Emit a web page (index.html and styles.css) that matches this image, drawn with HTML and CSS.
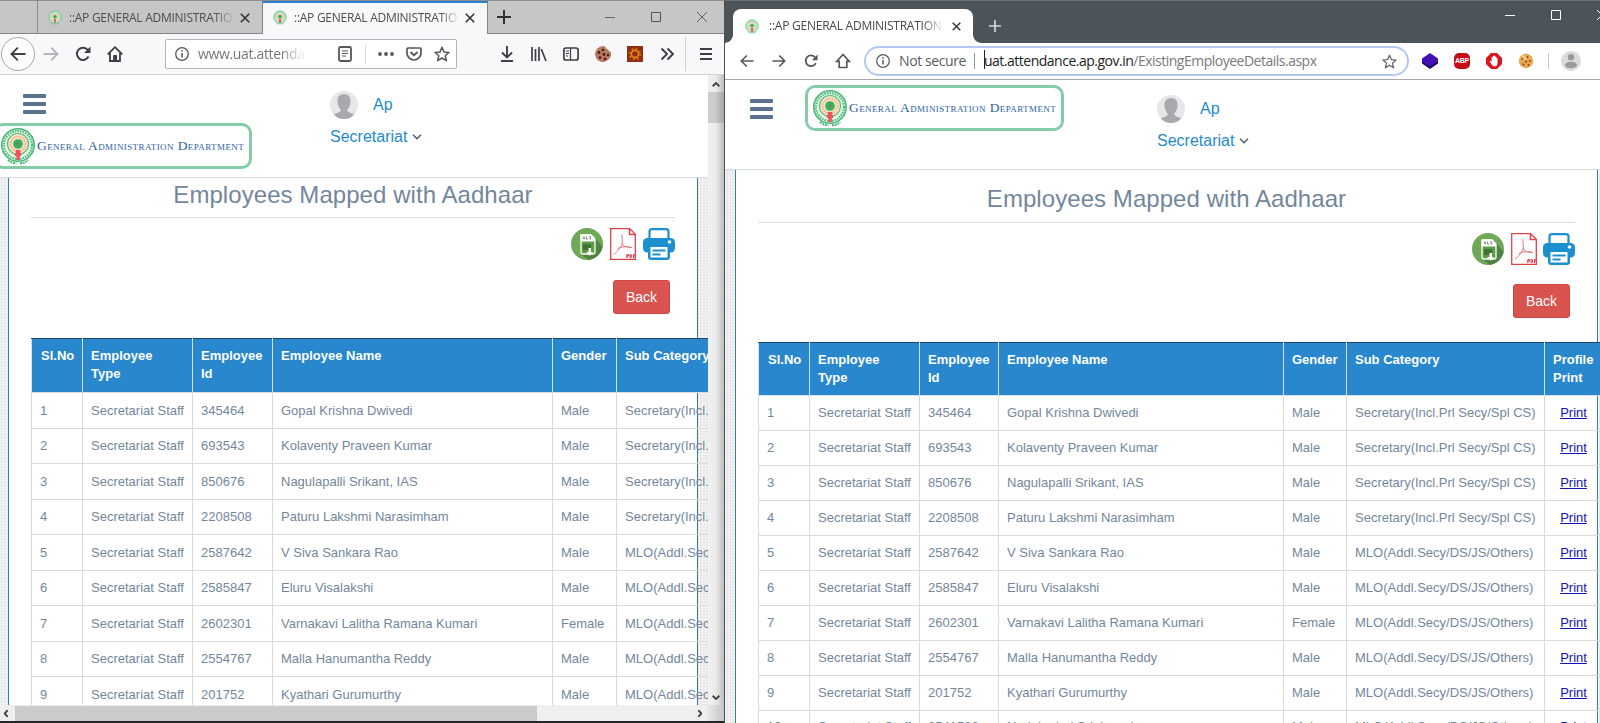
FILE: index.html
```html
<!DOCTYPE html>
<html lang="en">
<head>
<meta charset="utf-8">
<title>::AP GENERAL ADMINISTRATION</title>
<link rel="stylesheet" href="styles.css">
</head>
<body>
<svg class="defs" width="0" height="0">
  <symbol id="emblem" viewBox="0 0 36 38">
    <circle cx="18" cy="18" r="16.2" fill="#e9f7ea" stroke="#48b878" stroke-width="1.6"/>
    <circle cx="18" cy="18" r="14" fill="none" stroke="#4fbb7c" stroke-width="2.2" stroke-dasharray="1.6 1"/>
    <circle cx="18" cy="17" r="10.5" fill="#fbe6c8" stroke="#53bd80" stroke-width="1.2"/>
    <circle cx="18" cy="17" r="7.6" fill="#f9dcbc" stroke="#e9ab7c" stroke-width="1.4" stroke-dasharray="1.3 .9"/>
    <circle cx="18" cy="17" r="4.8" fill="#35b268"/>
    <path d="M16.4 17h3.2M18 14.6v5" stroke="#8b7a3c" stroke-width="1"/>
    <path d="M15.8 23h4.4v3h1v3h-1.4v4h-3.4v-4h-1.6v-3h1z" fill="#e8545a"/>
    <path d="M8 33q4 3.4 8.4 3.2M20 36.2q4.400.2 8.300-3.200" fill="none" stroke="#48b878" stroke-width="2" stroke-dasharray="2 .8"/>
  </symbol>
  <symbol id="avatar" viewBox="0 0 28 28">
    <circle cx="14" cy="14" r="14" fill="#e6e7e8"/>
    <path d="M14 3c4.400 0 6.800 3 6.500 7.500-.2 4-1.600 6.500-3.300 8 0 2.400 1.800 3 4.800 3.900.9.300 1.600.7 2 1.300A14 14 0 0 1 14 28 14 14 0 0 1 4 23.700c.4-.6 1.100-1 2-1.300 3-.9 4.800-1.500 4.800-3.900-1.700-1.500-3.100-4-3.300-8C7.200 6 9.600 3 14 3z" fill="#a7a9ac"/>
  </symbol>
  <symbol id="xls" viewBox="0 0 32 32">
    <circle cx="16" cy="16" r="16" fill="#6fa857"/>
    <path d="M23 9l8.500 9.500A16 16 0 0 1 18 31.900l-8-6z" fill="#4f8340"/>
    <path d="M10 7h10l4 4v13a2 2 0 0 1-2 2H12a2 2 0 0 1-2-2z" fill="#5c9c46" stroke="#fff" stroke-width="1.300"/>
    <path d="M9.500 6.500h11l3.500 4v3H9.500z" fill="#fff"/>
    <path d="M12 8.500l2 2.500m0-2.500L12 11M15.500 8.500V11H17M20 8.700h-1.500L20 11h-1.500" stroke="#5a7a50" stroke-width=".8" fill="none"/>
    <path d="M12 16h8v6h-8z" fill="#3f7434"/>
    <path d="M17.500 20h2.500v4h2.200l-3.500 3.700-3.500-3.700h2.300z" fill="#fff"/>
  </symbol>
  <symbol id="pdf" viewBox="0 0 26 32">
    <path d="M.7.7h19l5.600 5.600v25H.7z" fill="#fff" stroke="#e0424a" stroke-width="1.300"/>
    <path d="M19.500.7v5.800h5.800" fill="none" stroke="#e0424a" stroke-width="1.500"/>
    <path d="M12 6c-1 2 1 3 .2 9-.6 4-3.700 7-8.200 11.500M12 15c1 3 3.500 4.300 10 4.500M8 20.500c4-2 8-2.500 14-1" fill="none" stroke="#e87878" stroke-width="1"/>
    <path d="M16.800 30v-3.400h1.800v1.500h-1.600M20 26.600h1q1.500 1.500 0 3h-1zM23.500 30v-3.400h1.500M23.500 28.200h1" fill="none" stroke="#d8303a" stroke-width="1"/>
  </symbol>
  <symbol id="printer" viewBox="0 0 32 32">
    <path d="M6.500 11V3.500A2.500 2.500 0 0 1 9 1.100h14a2.500 2.500 0 0 1 2.500 2.400V11" fill="#fff" stroke="#1b8fd0" stroke-width="2.200"/>
    <rect x="0" y="10" width="32" height="14.500" rx="4.500" fill="#1b8fd0"/>
    <rect x="5" y="16" width="22" height="16" rx="3" fill="#1b8fd0"/>
    <rect x="7.500" y="19" width="17" height="10.500" fill="#fff"/>
    <path d="M9.500 22.500h13M9.500 26.500h8" stroke="#1b8fd0" stroke-width="2"/>
    <circle cx="26.500" cy="14" r="1.800" fill="#fff"/>
  </symbol>
  <symbol id="info" viewBox="0 0 14 14"><circle cx="7" cy="7" r="6.300" fill="none" stroke="currentColor" stroke-width="1.300"/><path d="M7 6v4.500M7 3.300v1.500" stroke="currentColor" stroke-width="1.500"/></symbol>
  <symbol id="star" viewBox="0 0 16 16"><path d="M8 1.300l2 4.600 5 .5-3.800 3.300 1.200 5L8 12l-4.400 2.700 1.200-5L1 6.400l5-.5z" fill="none" stroke="currentColor" stroke-width="var(--sw,1.500)" stroke-linejoin="round"/></symbol>
  <symbol id="close" viewBox="0 0 10 10"><path d="M.8.8l8.400 8.400M9.200.8L.8 9.200" stroke="currentColor" stroke-width="1.600"/></symbol>
  <symbol id="reload" viewBox="0 0 16 16"><path d="M13.500 10.500A6.100 6.100 0 1 1 12.800 4" fill="none" stroke="currentColor" stroke-width="2"/><path d="M15.500.5V7H9z" fill="currentColor"/></symbol>
  <symbol id="back" viewBox="0 0 16 16"><path d="M15.500 8H1.700M7.800 1.700L1.500 8l6.300 6.300" fill="none" stroke="currentColor" stroke-width="1.900"/></symbol>
  <symbol id="chev" viewBox="0 0 10 6"><path d="M1 .8l4 4 4-4" fill="none" stroke="currentColor" stroke-width="1.500"/></symbol>
  <symbol id="scroll-chev" viewBox="0 0 10 6"><path d="M.8.8L5 4.800 9.200.8" fill="none" stroke="currentColor" stroke-width="2.400"/></symbol>
</svg>

<main class="screen">
  <section class="win firefox">
    <div class="ff-tabs">
      <div class="ff-tab">
        <svg class="fav"><use href="#emblem"/></svg><span class="tab-title">::AP GENERAL ADMINISTRATIO</span><svg class="tab-x"><use href="#close"/></svg>
      </div>
      <div class="ff-tab active">
        <svg class="fav"><use href="#emblem"/></svg><span class="tab-title">::AP GENERAL ADMINISTRATIO</span><svg class="tab-x"><use href="#close"/></svg>
      </div>
      <svg class="ff-plus" viewBox="0 0 14 14"><path d="M7 0v14M0 7h14" stroke="#333" stroke-width="2"/></svg>
      <div class="ff-controls">
        <svg viewBox="0 0 10 10"><path d="M0 5.500h10" stroke="#666"/></svg>
        <svg viewBox="0 0 10 10"><path d="M.5.5h9v9h-9z" fill="none" stroke="#555"/></svg>
        <svg viewBox="0 0 10 10"><path d="M0 0l10 10M10 0L0 10" stroke="#555" stroke-width=".9"/></svg>
      </div>
    </div>
    <div class="ff-bar">
      <span class="ff-back"><svg class="i16"><use href="#back"/></svg></span>
      <svg class="i16 fwd dim"><use href="#back"/></svg>
      <svg class="i16 ff-reload"><use href="#reload"/></svg>
      <svg class="i16 ff-home" viewBox="0 0 16 16"><path d="M.7 8.300L8 1.200l7.300 7.100M3 7v8h10V7" fill="none" stroke="currentColor" stroke-width="1.800"/><path d="M6.700 15V9.500h2.800V15" fill="currentColor" stroke="currentColor"/></svg>
      <div class="ff-url">
        <svg class="i14"><use href="#info"/></svg>
        <span class="ff-address">www.uat.attenda</span>
        <svg class="i16 reader" viewBox="0 0 16 16"><rect x="2" y="1" width="12" height="14" rx="1.500" fill="none" stroke="currentColor" stroke-width="1.800"/><path d="M5 5h6M5 7.500h6M5 10h4" stroke="currentColor"/></svg>
        <i class="ff-div"></i>
        <svg class="i16 dots" viewBox="0 0 16 16"><circle cx="2" cy="8" r="1.900"/><circle cx="8" cy="8" r="1.900"/><circle cx="14" cy="8" r="1.900"/></svg>
        <svg class="i16 pocket" viewBox="0 0 16 16"><path d="M2 2h12q1 0 1 1v4a7 7 0 0 1-14 0V3q0-1 1-1z" fill="none" stroke="currentColor" stroke-width="1.700"/><path d="M4.500 6L8 9.300 11.500 6" fill="none" stroke="currentColor" stroke-width="1.900"/></svg>
        <svg class="i16"><use href="#star"/></svg>
      </div>
      <div class="ff-tools">
        <svg viewBox="0 0 16 16"><path d="M8 0v11M3 6.500l5 5 5-5M2 15h12" fill="none" stroke="currentColor" stroke-width="1.900"/></svg>
        <svg viewBox="0 0 16 16"><path d="M1 1v14M4.500 3v12M8 1v14M10.300 3L15 15" stroke="currentColor" stroke-width="1.700"/></svg>
        <svg viewBox="0 0 16 16"><rect x=".9" y="2" width="14.200" height="12" rx="2" fill="none" stroke="currentColor" stroke-width="1.700"/><path d="M7.500 2v12M3 5h3M3 7.500h3M3 10h2" stroke="currentColor" stroke-width="1.200"/></svg>
        <svg viewBox="0 0 16 16"><path d="M8 0q2 0 2.500 1.200.5 2 2.500 2 .5 2.300 2.700 2.500A8 8 0 1 1 8 0z" fill="#b87a62"/><g fill="#4a1b14"><circle cx="8" cy="4" r="1.300"/><circle cx="4" cy="6.500" r="1.400"/><circle cx="9" cy="8.500" r="1.400"/><circle cx="13" cy="9" r="1.200"/><circle cx="5" cy="11.500" r="1.300"/><circle cx="10" cy="13" r="1.300"/></g></svg>
        <svg viewBox="0 0 16 16"><path d="M0 0h16v16H0z" fill="#8f2f12"/><circle cx="8" cy="8" r="3.600" fill="none" stroke="#f08a14" stroke-width="1.600"/><circle cx="8" cy="8" r="5.200" fill="none" stroke="#e87a10" stroke-width="1.800" stroke-dasharray="1.700 2.380"/></svg>
        <svg viewBox="0 0 16 16"><path d="M2.500 2.500L8 8l-5.500 5.500M8.500 2.500L14 8l-5.500 5.500" fill="none" stroke="currentColor" stroke-width="1.900"/></svg>
      </div>
      <i class="ff-div tall"></i>
      <svg class="ff-menu" viewBox="0 0 12 12"><path d="M0 1h12M0 6h12M0 11h12" stroke="currentColor" stroke-width="1.900"/></svg>
    </div>
    <div class="ff-view">
      <div class="page">
        <header class="site-head">
          <div class="burger"><i></i><i></i><i></i></div>
          <div class="brand"><svg><use href="#emblem"/></svg><span>General Administration Department</span></div>
          <div class="user"><svg class="face"><use href="#avatar"/></svg><span class="u1">Ap</span><span class="u2">Secretariat</span><svg class="caret"><use href="#chev"/></svg></div>
        </header>
        <div class="content">
          <h1>Employees Mapped with Aadhaar</h1>
          <div class="exports"><svg class="e1"><use href="#xls"/></svg><svg class="e2"><use href="#pdf"/></svg><svg class="e1"><use href="#printer"/></svg></div>
          <a class="back-btn">Back</a>
          <table><colgroup><col class="c1"><col class="c2"><col class="c3"><col class="c4"><col class="c5"><col class="c6"></colgroup><thead><tr><th>Sl.No</th><th>Employee<br>Type</th><th>Employee<br>Id</th><th>Employee Name</th><th>Gender</th><th>Sub Category</th></tr></thead><tbody data-rows="9"></tbody></table>
        </div>
      </div>
      <div class="vscroll"><svg class="sarrow up"><use href="#scroll-chev"/></svg><i class="thumb"></i><svg class="sarrow down"><use href="#scroll-chev"/></svg></div>
    </div>
    <div class="hscroll"><svg class="sarrow left"><use href="#scroll-chev"/></svg><i class="thumb"></i><svg class="sarrow right"><use href="#scroll-chev"/></svg></div>
    <div class="taskbar"></div>
  </section>

  <section class="win chrome">
    <div class="cr-tabs">
      <div class="cr-tab"><svg class="fav"><use href="#emblem"/></svg><span class="tab-title">::AP GENERAL ADMINISTRATION</span><svg class="tab-x"><use href="#close"/></svg></div>
      <svg class="cr-plus" viewBox="0 0 12 12"><path d="M6 0v12M0 6h12" stroke="#d5d8da" stroke-width="1.700"/></svg>
      <div class="cr-controls">
        <svg viewBox="0 0 10 10"><path d="M0 5.500h10" stroke="#fff"/></svg>
        <svg viewBox="0 0 10 10"><path d="M.5.5h9v9h-9z" fill="none" stroke="#fff"/></svg>
        <svg viewBox="0 0 10 10"><path d="M0 0l10 10M10 0L0 10" stroke="#fff"/></svg>
      </div>
    </div>
    <div class="cr-bar">
      <svg class="n14"><use href="#back"/></svg>
      <svg class="n14 fwd"><use href="#back"/></svg>
      <svg class="n14"><use href="#reload"/></svg>
      <svg class="n16" viewBox="0 0 16 16"><path d="M8 1.500L1.800 8.300h2.400V14.500h7.600V8.300h2.400z" fill="none" stroke="currentColor" stroke-width="1.700"/></svg>
      <div class="cr-url">
        <svg class="i14"><use href="#info"/></svg><span class="ns">Not secure</span><i></i><b></b><span class="addr"><em>uat.attendance.ap.gov.in</em>/ExistingEmployeeDetails.aspx</span><svg class="cr-star"><use href="#star"/></svg>
      </div>
      <div class="cr-ext">
        <svg viewBox="0 0 16 16"><path d="M8 3l8 4.500v3L8 16 0 10.500v-3z" fill="#1f0a6e"/><path d="M8 0l8 5.500v3L8 13 0 8.500v-3z" fill="#4410b4"/></svg>
        <span class="abp">ABP</span>
        <svg viewBox="0 0 16 16"><path d="M5 0h6l5 5v6l-5 5H5l-5-5V5z" fill="#db1420"/><path d="M5.300 11L3.600 8.200q.6-.8 1.500.1L5.600 9V4.300q.6-.8 1.100 0V3.200q.6-.8 1.200 0v-.4q.7-.7 1.200 0v1q.7-.7 1.200 0v1.400q.7-.6 1.200 0V10q0 3.400-3 3.400-2 0-3.200-2.400z" fill="#fff"/></svg>
        <svg viewBox="0 0 16 16"><circle cx="8" cy="8" r="7.200" fill="#e9a550"/><circle cx="6" cy="5" r="2.500" fill="#f8c878"/><g fill="#7b4217"><circle cx="4.500" cy="6" r=".9"/><circle cx="9.500" cy="4" r=".9"/><circle cx="8" cy="8.500" r="1"/><circle cx="12" cy="8" r=".9"/><circle cx="5.500" cy="11.500" r=".9"/><circle cx="10.500" cy="12" r=".9"/></g></svg>
      </div>
      <i class="cr-div"></i>
      <svg class="cr-user" viewBox="0 0 20 20"><circle cx="10" cy="10" r="10" fill="#dadada"/><circle cx="10" cy="6.200" r="3.200" fill="#999"/><ellipse cx="10" cy="14" rx="6" ry="3.300" fill="#999"/></svg>
    </div>
    <div class="page">
      <header class="site-head">
        <div class="burger"><i></i><i></i><i></i></div>
        <div class="brand"><svg><use href="#emblem"/></svg><span>General Administration Department</span></div>
        <div class="user"><svg class="face"><use href="#avatar"/></svg><span class="u1">Ap</span><span class="u2">Secretariat</span><svg class="caret"><use href="#chev"/></svg></div>
      </header>
      <div class="content">
        <h1>Employees Mapped with Aadhaar</h1>
        <div class="exports"><svg class="e1"><use href="#xls"/></svg><svg class="e2"><use href="#pdf"/></svg><svg class="e1"><use href="#printer"/></svg></div>
        <a class="back-btn">Back</a>
        <table><colgroup><col class="c1"><col class="c2"><col class="c3"><col class="c4"><col class="c5"><col class="c6"><col class="c7"></colgroup><thead><tr><th>Sl.No</th><th>Employee<br>Type</th><th>Employee<br>Id</th><th>Employee Name</th><th>Gender</th><th>Sub Category</th><th>Profile<br>Print</th></tr></thead><tbody data-rows="10" data-print="1"></tbody></table>
      </div>
    </div>
  </section>
</main>
<script src="app.js"></script>
</body>
</html>
```

FILE: styles.css
```css
* { box-sizing: border-box; }
body { margin: 0; overflow: hidden; font-family: "Liberation Sans", Arial, sans-serif; background: #fff; }
svg { display: block; flex: none; }
.defs { position: absolute; }
.screen { display: flex; width: 1600px; height: 723px; overflow: hidden; }
.win { display: flex; flex-direction: column; height: 723px; overflow: hidden; flex: none; }
.firefox { width: 725px; border-right: 1px solid #4b4f53; }
.chrome { width: 875px; }
.fav { width: 14px; height: 15px; }
.tab-title { font: 12px/16px "Open Sans", "Noto Sans", sans-serif; white-space: nowrap; overflow: hidden; -webkit-mask-image: linear-gradient(90deg, #000 88%, transparent); mask-image: linear-gradient(90deg, #000 88%, transparent); }
.tab-x { width: 10px; height: 10px; color: #333; }

/* Firefox chrome */
.ff-tabs { display: flex; height: 34px; background: #c6c6c6; border-top: 1px solid #8e8e8e; flex: none; padding-left: 37px; box-shadow: inset 0 -1px #85858a; }
.ff-tab { display: flex; align-items: center; width: 225px; border-left: 1px solid #8d8d8d; padding: 0 12px 0 10px; color: #4e4e50; }
.ff-tab .tab-title { width: 166px; margin: 0 5px 0 7px; letter-spacing: -.27px; }
.ff-tab .tab-x { margin-left: auto; }
.ff-tab.active { background: #f8f8fa; border-left-color: #85858a; border-top: 2px solid #2a7fd4; border-right: 1px solid #85858a; width: 226px; padding-bottom: 2px; }
.ff-plus { width: 14px; height: 14px; margin: 9px 0 0 9px; }
.ff-controls { display: flex; gap: 36px; margin: 11px 17px 0 auto; }
.ff-controls svg { width: 10px; height: 10px; }
.ff-bar { display: flex; align-items: center; height: 41px; background: #f8f8fa; border-bottom: 1px solid #d2d2d6; flex: none; color: #3f3f43; padding-left: 1px; padding-bottom: 1px; }
.i16 { width: 16px; height: 16px; }
.i14 { width: 14px; height: 14px; }
.ff-back { display: grid; place-items: center; width: 34px; height: 34px; border: 1px solid #a8a8ac; border-radius: 50%; background: #fdfdfd; }
.fwd { transform: scaleX(-1); }
.dim { color: #b6b6ba; margin-left: 8px; }
.ff-reload { margin-left: 16px; }
.ff-home { margin-left: 16px; }
.ff-url { display: flex; align-items: center; width: 292px; height: 30px; margin-left: 42px; border: 1px solid #b4b4b8; border-radius: 2px; background: #fff; padding-left: 9px; color: #57575b; }
.ff-address { width: 107px; margin-left: 9px; margin-right: 32px; font: 14px/20px "Open Sans", "Noto Sans", sans-serif; letter-spacing: -.35px; color: #77777b; white-space: nowrap; -webkit-mask-image: linear-gradient(90deg, #000 78%, rgba(0,0,0,.15) 96%); mask-image: linear-gradient(90deg, #000 78%, rgba(0,0,0,.15) 96%); }
.ff-div { width: 1px; height: 20px; background: #ddd; margin-left: 12px; }
.ff-div.tall { height: 34px; background: #d0d0d4; margin-left: 10px; }
.dots { fill: currentColor; margin-left: 12px; }
.pocket { margin: 0 12px; }
.ff-tools { display: flex; gap: 16px; margin-left: 42px; }
.ff-tools svg { width: 16px; height: 16px; }
.ff-menu { width: 12px; height: 12px; margin-left: 14px; }
.ff-view { display: flex; height: 630px; flex: none; }
.firefox .page { width: 708px; height: 630px; }
.vscroll { width: 16px; margin-left: auto; display: flex; flex-direction: column; align-items: center; background: linear-gradient(90deg, #f1f1f1, #eaeaea 50%, #bdbdbd); color: #444; }
.vscroll .thumb { width: 16px; height: 31px; margin-top: 5px; background: linear-gradient(90deg, #cdcdcd 40%, #a8a8a8); }
.sarrow { width: 8px; height: 5px; flex: none; }
.up { transform: scaleY(-1); margin-top: 7px; }
.down { margin: auto 0 5px; }
.hscroll { display: flex; align-items: center; height: 16px; flex: none; background: linear-gradient(90deg, #efefef 705px, #c4c4c4); color: #444; }
.hscroll .left { transform: rotate(90deg); margin-left: 2px; }
.hscroll .thumb { width: 522px; height: 15px; margin-left: 5px; background: #cbcbcb; }
.hscroll .right { transform: rotate(-90deg); margin-left: 159px; }
.taskbar { height: 2px; background: #26262a; }

/* Chrome frame */
.cr-tabs { display: flex; height: 43px; background: #4c5459; border-top: 1px solid #6a7276; flex: none; padding-left: 8px; }
.cr-tab { position: relative; display: flex; align-items: center; width: 240px; height: 34px; margin-top: 8px; background: #fff; border-radius: 8px 8px 0 0; padding: 0 12px 0 12px; color: #45494d; }
.cr-tab::after { content: ""; position: absolute; left: 240px; bottom: 0; width: 8px; height: 8px; background: radial-gradient(circle at 100% 0, transparent 7.5px, #fff 8px); }
.cr-tab::before { content: ""; position: absolute; left: -8px; bottom: 0; width: 8px; height: 8px; background: radial-gradient(circle at 0 0, transparent 7.5px, #fff 8px); }
.cr-tab .tab-title { width: 175px; margin-left: 10px; letter-spacing: -.24px; }
.cr-tab .tab-x { width: 9px; height: 9px; margin-left: auto; }
.cr-plus { width: 12px; height: 12px; margin: 19px 0 0 16px; }
.cr-controls { display: flex; gap: 36px; margin: 9px -7px 0 auto; }
.cr-controls svg { width: 10px; height: 10px; }
.cr-bar { display: flex; align-items: center; height: 37px; background: #fff; border-bottom: 1px solid #a9a9a9; flex: none; color: #54585c; padding-left: 15px; }
.n14 { width: 14px; height: 14px; margin-right: 18px; }
.n16 { width: 16px; height: 16px; margin-left: -1px; }
.cr-url { display: flex; align-items: center; width: 545px; height: 30px; margin-left: 13px; border: 2px solid #b6c6f3; border-radius: 15px; padding-left: 10px; color: #5a5d61; font: 14px/20px "Open Sans", "Noto Sans", sans-serif; white-space: nowrap; }
.ns { width: 67px; margin-left: 9px; letter-spacing: -.4px; }
.cr-url i { width: 1px; height: 16px; background: #9a9a9a; margin-left: 8px; }
.cr-url b { width: 1px; height: 19px; background: #222; margin: -4px 0 0 9px; }
.addr { color: #77797c; letter-spacing: -.5px; margin-left: -1px; }
.addr em { font-style: normal; color: #222; }
.cr-star { width: 15px; height: 15px; margin: 0 10px 0 auto; --sw: 1.300; }
.cr-ext { display: flex; gap: 16px; margin-left: 13px; }
.cr-ext svg, .abp { width: 16px; height: 16px; }
.abp { background: #c40d14; border-radius: 5px; color: #fff; font: bold 7px/16px "Liberation Sans", Arial, sans-serif; text-align: center; letter-spacing: -.2px; }
.cr-div { width: 1px; height: 16px; background: #c8c8c8; margin-left: 14px; }
.cr-user { width: 20px; height: 20px; margin-left: 12px; }

/* Web page */
.page { display: flex; flex-direction: column; overflow: hidden; background-color: #ededed; background-image: repeating-linear-gradient(90deg, rgba(255,255,255,.5) 0 1px, transparent 1px 3px), repeating-linear-gradient(0deg, rgba(205,205,205,.3) 0 1px, transparent 1px 3px); }
.chrome .page { height: 643px; }
.site-head { display: grid; background: #fff; border-bottom: 1px solid #d6dbdf; flex: none; align-items: start; }
.firefox .site-head { height: 103px; grid-template-columns: 330px 1fr; grid-template-rows: 48px 1fr; }
.chrome .site-head { height: 90px; grid-template-columns: 80px 352px 1fr; }
.burger { display: flex; flex-direction: column; gap: 4px; width: 23px; }
.burger i { height: 4px; border-radius: 1px; background: #5a738e; }
.firefox .burger { margin: 19px 0 0 23px; }
.chrome .burger { margin: 19px 0 0 25px; }
.brand { display: flex; align-items: center; width: 259px; height: 46px; border: 3px solid #85cda9; border-radius: 10px; padding-left: 5px; background: #fff; }
.firefox .brand { grid-row: 2; grid-column: 1; margin-left: -7px; }
.chrome .brand { margin-top: 5px; }
.brand svg { width: 36px; height: 38px; margin-left: -1px; }
.brand span { font: 13.500px/20px "Liberation Serif", "Times New Roman", serif; font-variant: small-caps; color: #2f62a2; margin: -1px 0 0 1px; white-space: nowrap; letter-spacing: .4px; }
.user { display: grid; grid-template-columns: 43px 37px 1fr; grid-template-rows: 28px 32px; color: #1f8bcb; font-size: 16px; line-height: 28px; width: 110px; }
.firefox .user { grid-row: 1 / 3; grid-column: 2; margin-top: 16px; }
.chrome .user { margin-top: 15px; }
.face { width: 28px; height: 28px; }
.u2 { grid-column: 1 / 3; grid-row: 2; padding-top: 4px; }
.caret { grid-column: 3; grid-row: 2; width: 10px; height: 6px; margin: 15px 0 0 2px; color: #4a5c6d; }
.content { flex: 1; display: flex; flex-direction: column; background: #fff; border: solid #2285b9; border-width: 0 1px; min-height: 0; }
.firefox .content { width: 690px; margin-left: 8px; padding: 0 22px; }
.chrome .content { width: 863px; margin-left: 10px; padding: 0 22px; }
h1 { margin: 0; font-weight: 400; font-size: 24px; letter-spacing: .06px; text-align: center; color: #73879c; border-bottom: 1px solid #dadcde; flex: none; }
.firefox h1 { height: 40px; line-height: 34px; }
.chrome h1 { height: 53px; line-height: 58px; }
.exports { display: flex; justify-content: flex-end; gap: 7px; margin-top: 10px; flex: none; }
.e1 { width: 32px; height: 32px; }
.e2 { width: 26px; height: 32px; }
.chrome .exports { gap: 6.500px; }
.back-btn { align-self: flex-end; width: 57px; height: 34px; margin: 20px 5px 0 0; border: 1px solid #ce4743; border-radius: 3px; background: #d9534f; color: #fff; font-size: 14px; line-height: 32px; text-align: center; flex: none; }
.chrome .back-btn { margin-top: 19px; }
table { table-layout: fixed; border-collapse: collapse; flex: none; margin-top: 24px; font-size: 13px; line-height: 18px; color: #73879c; }
.firefox table { width: 786px; }
.chrome table { width: 844px; }
.c1 { width: 51px; } .c2 { width: 110px; } .c3 { width: 80px; } .c4 { width: 280px; } .c5 { width: 64px; } .c6 { width: 201px; } .c7 { width: 58px; }
.chrome .c3 { width: 79px; } .chrome .c4 { width: 285px; } .chrome .c5 { width: 63px; } .chrome .c6 { width: 198px; }
th { background: #2887cd; color: #fff; text-align: left; vertical-align: top; padding: 8px; border: 1px solid #d5dfe8; border-top: 1px solid #1d4768; height: 54px; white-space: nowrap; }
th:first-child { padding-left: 9px; padding-right: 0; }
.chrome th { height: 53px; }
td { padding: 0 8px; border: 1px solid #d8dbde; white-space: nowrap; height: 35px; }
.firefox td { height: 35.500px; padding-top: 1px; }
.chrome td { padding-bottom: 1px; }
.chrome td:last-child { text-align: center; padding: 0 0 1px; }
.chrome tr:last-child td { vertical-align: top; padding-top: 7px; }
td a { color: #1414b4; text-decoration: underline; }
```

FILE: app.js
```js
const sec = "Secretary(Incl.Prl Secy/Spl CS)";
const mlo = "MLO(Addl.Secy/DS/JS/Others)";
const employees = [
  ["345464", "Gopal Krishna Dwivedi", "Male", sec],
  ["693543", "Kolaventy Praveen Kumar", "Male", sec],
  ["850676", "Nagulapalli Srikant, IAS", "Male", sec],
  ["2208508", "Paturu Lakshmi Narasimham", "Male", sec],
  ["2587642", "V Siva Sankara Rao", "Male", mlo],
  ["2585847", "Eluru Visalakshi", "Male", mlo],
  ["2602301", "Varnakavi Lalitha Ramana Kumari", "Female", mlo],
  ["2554767", "Malla Hanumantha Reddy", "Male", mlo],
  ["201752", "Kyathari Gurumurthy", "Male", mlo],
  ["2541588", "Nadakuduri Srinivasulu", "Male", mlo]
];
document.querySelectorAll("tbody").forEach(body => {
  const print = body.dataset.print ? "<td><a>Print</a></td>" : "";
  body.innerHTML = employees.slice(0, +body.dataset.rows).map(([id, name, gender, category], i) =>
    `<tr><td>${i + 1}</td><td>Secretariat Staff</td><td>${id}</td><td>${name}</td><td>${gender}</td><td>${category}</td>${print}</tr>`
  ).join("");
});
```
